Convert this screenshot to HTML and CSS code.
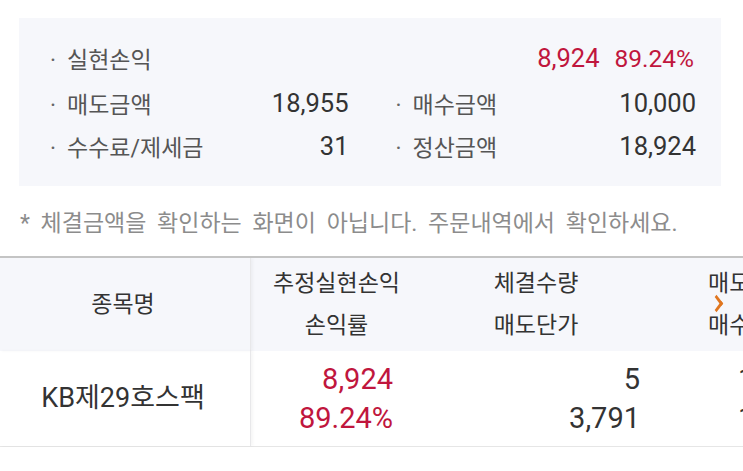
FILE: index.html
```html
<!DOCTYPE html>
<html lang="ko">
<head>
<meta charset="utf-8">
<link rel="stylesheet" href="styles.css">
</head>
<body>
<div class="page">
  <div class="summary">
    <div class="row full">
      <span class="label">실현손익</span>
      <span class="val red"><span>8,924</span><span class="pct">89.24%</span></span>
    </div>
    <div class="row">
      <div class="item"><span class="label">매도금액</span><span class="val">18,955</span></div>
      <div class="item"><span class="label">매수금액</span><span class="val">10,000</span></div>
    </div>
    <div class="row">
      <div class="item"><span class="label">수수료/제세금</span><span class="val">31</span></div>
      <div class="item"><span class="label">정산금액</span><span class="val">18,924</span></div>
    </div>
  </div>
  <p class="note">* 체결금액을 확인하는 화면이 아닙니다. 주문내역에서 확인하세요.</p>
  <div class="table">
    <div class="thead">
      <div class="c c1 sticky"><span>종목명</span></div>
      <div class="c c2"><span>추정실현손익</span><span>손익률</span></div>
      <div class="c c3"><span>체결수량</span><span>매도단가</span></div>
      <div class="c c4"><span>매도금액</span><span>매수금액</span></div>
    </div>
    <div class="tbody">
      <div class="c c1 sticky name"><span>KB제29호스팩</span></div>
      <div class="c c2 num red"><span>8,924</span><span>89.24%</span></div>
      <div class="c c3 num"><span>5</span><span>3,791</span></div>
      <div class="c c4 num"><span>18,955</span><span>10,000</span></div>
    </div>
    <span class="more"></span>
  </div>
</div>
</body>
</html>
```
FILE: styles.css
```css
html, body {
  margin: 0;
  padding: 0;
  background: #ffffff;
}
.page {
  width: 743px;
  height: 471px;
  overflow: hidden;
  font-family: "Roboto", "Noto Sans CJK KR", sans-serif;
  color: #333333;
  padding-top: 18px;
  box-sizing: border-box;
}
.summary {
  margin-left: 19px;
  width: 702px;
  height: 168px;
  box-sizing: border-box;
  background: #f6f7fb;
  padding: 18px 27px 0 31px;
  display: flex;
  flex-direction: column;
}
.row {
  height: 43px;
  display: grid;
  grid-template-columns: 1fr 1fr;
  column-gap: 47px;
  align-items: center;
  font-size: 23px;
}
.row:nth-child(2) {
  padding-top: 2px;
}
.row.full {
  display: flex;
  justify-content: space-between;
}
.item {
  display: flex;
  justify-content: space-between;
  align-items: center;
}
.item:last-child .val {
  margin-right: -2px;
}
.label {
  color: #555555;
}
.label::before {
  content: "·";
  display: inline-block;
  width: 17px;
  color: #666666;
}
.val {
  color: #333333;
  font-size: 25.5px;
}
.red, .val.red {
  color: #c0163d;
}
.pct {
  margin-left: 15px;
  font-size: 24.5px;
}
.note {
  margin: 18px 0 0 20px;
  height: 40px;
  line-height: 40px;
  font-size: 23px;
  word-spacing: 5px;
  color: #8c8c8c;
}
.table {
  position: relative;
  margin-top: 12px;
  border-top: 2px solid #c4c4c4;
  width: 743px;
  overflow: hidden;
}
.thead, .tbody {
  display: flex;
  width: 1000px;
}
.thead {
  height: 93px;
  background: #f6f7fb;
  font-size: 23px;
}
.tbody {
  height: 95px;
  border-bottom: 1px solid #e6e6e6;
  font-size: 29px;
}
.c {
  display: flex;
  flex-direction: column;
  justify-content: center;
  box-sizing: border-box;
}
.thead .c {
  align-items: center;
  line-height: 42px;
}
.tbody .c {
  line-height: 39px;
}
.c1 {
  width: 251px;
  align-items: center;
}
.tbody .name {
  font-size: 27px;
}
.sticky {
  border-right: 1px solid #e8e8ea;
  box-shadow: 2px 0 3px rgba(0, 0, 0, 0.04);
  padding-right: 4px;
}
.c2 {
  width: 162px;
}
.thead .c2 {
  padding-left: 9px;
}
.c3 {
  width: 246px;
}
.c4 {
  width: 250px;
}
.thead .c4 {
  align-items: flex-start;
  padding-left: 49px;
}
.tbody .num {
  align-items: flex-end;
}
.tbody .c2 {
  padding-right: 20px;
}
.tbody .c3 {
  padding-right: 19px;
}
.tbody .c4 {
  align-items: flex-start;
  padding-left: 79px;
}
.more {
  position: absolute;
  left: 711px;
  top: 37px;
  width: 12px;
  height: 18px;
}
.more::before {
  content: "";
  position: absolute;
  left: 0;
  top: 3px;
  width: 8px;
  height: 8px;
  border-top: 3px solid #e0761f;
  border-right: 3px solid #e0761f;
  transform: rotate(45deg) skew(8deg, 8deg);
}
```
